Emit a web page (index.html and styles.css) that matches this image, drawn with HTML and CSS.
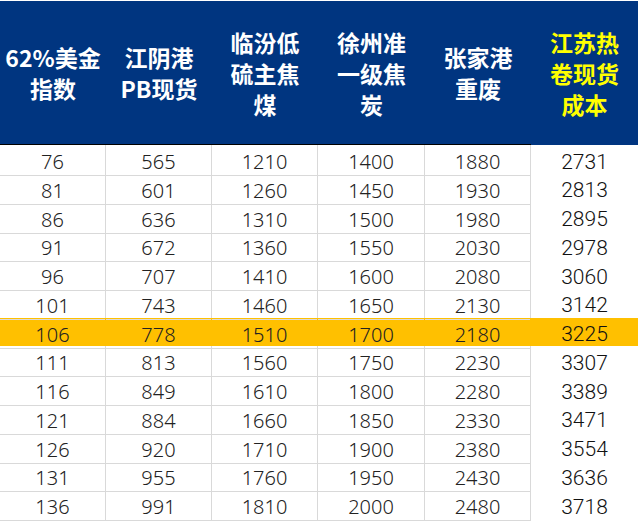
FILE: index.html
```html
<!DOCTYPE html>
<html lang="zh">
<head>
<meta charset="utf-8">
<link rel="stylesheet" href="styles.css">
</head>
<body>
<div class="sheet">
  <div class="head">
    <div class="hc"><span>62%美金</span><span>指数</span></div>
    <div class="hc"><span>江阴港</span><span>PB现货</span></div>
    <div class="hc"><span>临汾低</span><span>硫主焦</span><span>煤</span></div>
    <div class="hc"><span>徐州准</span><span>一级焦</span><span>炭</span></div>
    <div class="hc"><span>张家港</span><span>重废</span></div>
    <div class="hc hl"><span>江苏热</span><span>卷现货</span><span>成本</span></div>
  </div>
  <div class="body">
    <div class="row"><span>76</span><span>565</span><span>1210</span><span>1400</span><span>1880</span><span class="cost">2731</span></div>
    <div class="row"><span>81</span><span>601</span><span>1260</span><span>1450</span><span>1930</span><span class="cost">2813</span></div>
    <div class="row"><span>86</span><span>636</span><span>1310</span><span>1500</span><span>1980</span><span class="cost">2895</span></div>
    <div class="row"><span>91</span><span>672</span><span>1360</span><span>1550</span><span>2030</span><span class="cost">2978</span></div>
    <div class="row"><span>96</span><span>707</span><span>1410</span><span>1600</span><span>2080</span><span class="cost">3060</span></div>
    <div class="row"><span>101</span><span>743</span><span>1460</span><span>1650</span><span>2130</span><span class="cost">3142</span></div>
    <div class="row mark"><span>106</span><span>778</span><span>1510</span><span>1700</span><span>2180</span><span class="cost">3225</span></div>
    <div class="row"><span>111</span><span>813</span><span>1560</span><span>1750</span><span>2230</span><span class="cost">3307</span></div>
    <div class="row"><span>116</span><span>849</span><span>1610</span><span>1800</span><span>2280</span><span class="cost">3389</span></div>
    <div class="row"><span>121</span><span>884</span><span>1660</span><span>1850</span><span>2330</span><span class="cost">3471</span></div>
    <div class="row"><span>126</span><span>920</span><span>1710</span><span>1900</span><span>2380</span><span class="cost">3554</span></div>
    <div class="row"><span>131</span><span>955</span><span>1760</span><span>1950</span><span>2430</span><span class="cost">3636</span></div>
    <div class="row"><span>136</span><span>991</span><span>1810</span><span>2000</span><span>2480</span><span class="cost">3718</span></div>
  </div>
</div>
</body>
</html>
```

FILE: styles.css
```css
html, body {
  margin: 0;
  padding: 0;
  background: #ffffff;
}
.sheet {
  width: 638px;
  height: 521px;
  overflow: hidden;
  padding-top: 1px;
  box-sizing: border-box;
}
.head, .row {
  display: grid;
  grid-template-columns: 106px 106px 106px 107px 106px 107px;
}
.head {
  height: 144px;
  background: #003580;
}
.hc {
  display: flex;
  flex-direction: column;
  align-items: center;
  justify-content: center;
  text-align: center;
  color: #ffffff;
  font-family: "Noto Sans CJK SC", "Liberation Sans", sans-serif;
  font-weight: bold;
  font-size: 23px;
  border-bottom: 1px solid #000000;
  padding-top: 1px;
  gap: 6px;
}
.hc span {
  display: block;
  line-height: 25px;
  height: 25px;
  white-space: nowrap;
}
.hc.hl {
  color: #ffff00;
  border-bottom-color: #003580;
}
.row {
  height: 28.75px;
}
.row span {
  display: flex;
  align-items: center;
  justify-content: center;
  padding-top: 3px;
  box-sizing: border-box;
  font-family: "Noto Sans", "Liberation Sans", sans-serif;
  font-weight: 300;
  font-size: 20px;
  color: #222222;
  border-right: 1px solid #d9d9d9;
  border-bottom: 1px solid #d9d9d9;
}
.row span.cost {
  border-right: none;
  border-bottom-color: transparent;
  font-family: "Roboto", "Liberation Sans", sans-serif;
  font-weight: 300;
  font-size: 21px;
  color: #111111;
}
.row.mark {
  background: #ffc000;
}
.row.mark span {
  border-right-color: #ffc000;
}
```
